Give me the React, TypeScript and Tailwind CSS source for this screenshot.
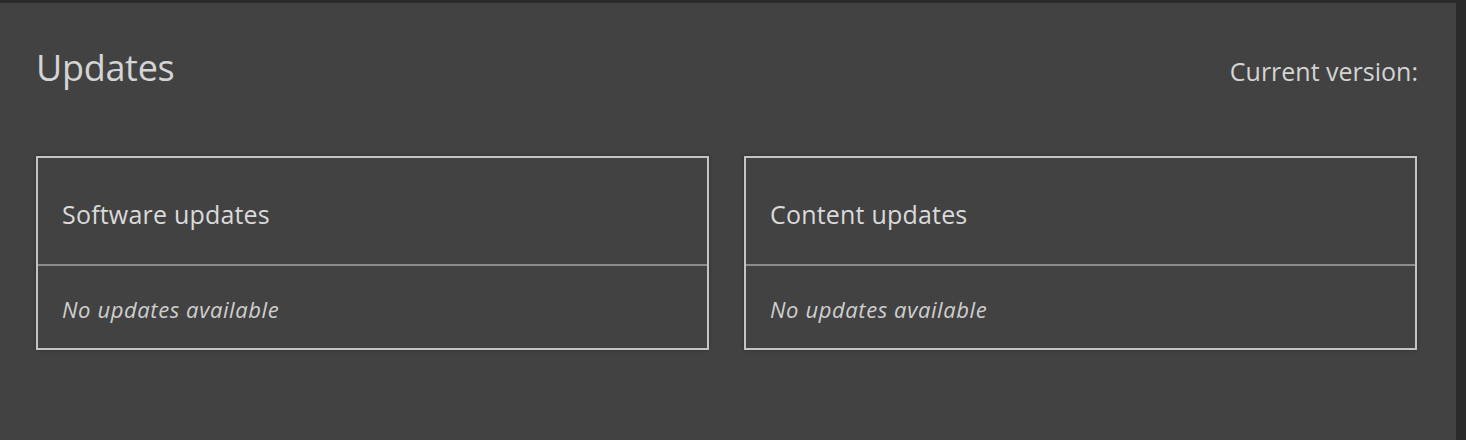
const font = { fontFamily: '"Open Sans", "Noto Sans", sans-serif' };

function UpdateCard({ title }: { title: string }) {
  return (
    <div className="w-[673px] flex flex-col border-2 border-[#c4c4c4] shadow-[0_0_3px_rgba(0,0,0,0.35)]">
      <div className="h-[108px] flex items-center px-6 pt-2 border-b-2 border-[#8c8c8c]">
        <span className="text-[25px] text-[#dadada] tracking-[0.2px]">{title}</span>
      </div>
      <div className="flex-1 flex items-center px-6 pt-1">
        <span className="italic text-[22px] text-[#cfcfcf] tracking-[0.6px]">No updates available</span>
      </div>
    </div>
  );
}

export default function App() {
  return (
    <div className="w-[1466px] h-[440px] bg-[#2a2a2a] pt-[3px] pr-[10px] flex" style={font}>
      <div className="flex-1 bg-[#424242] pl-9 pr-[38px] pt-[36px]">
        <div className="flex justify-between items-baseline h-[57px]">
          <h1 className="text-[36px] leading-[57px] text-[#d4d4d4] tracking-[-0.3px]">Updates</h1>
          <span className="text-[25px] text-[#d4d4d4] tracking-[0px]">Current version:</span>
        </div>
        <div className="flex gap-[35px] mt-[60px] h-[194px]">
          <UpdateCard title="Software updates" />
          <UpdateCard title="Content updates" />
        </div>
      </div>
    </div>
  );
}
